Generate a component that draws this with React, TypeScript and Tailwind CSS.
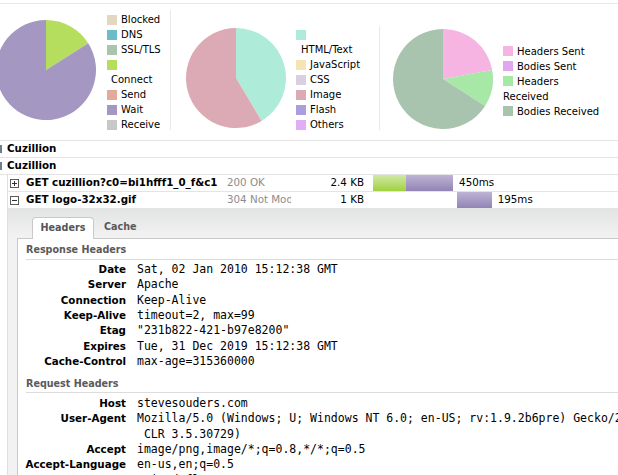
import React from "react";

function arc(cx: number, cy: number, r: number, a0: number, a1: number) {
  const rad = (a: number) => ((a - 90) * Math.PI) / 180;
  const x0 = cx + r * Math.cos(rad(a0));
  const y0 = cy + r * Math.sin(rad(a0));
  const x1 = cx + r * Math.cos(rad(a1));
  const y1 = cy + r * Math.sin(rad(a1));
  const large = a1 - a0 > 180 ? 1 : 0;
  return `M${cx} ${cy} L${x0.toFixed(2)} ${y0.toFixed(2)} A${r} ${r} 0 ${large} 1 ${x1.toFixed(2)} ${y1.toFixed(2)} Z`;
}

function Pie({ slices }: { slices: [number, string][] }) {
  let a = 0;
  return (
    <svg width="100" height="100" viewBox="0 0 100 100" className="shrink-0">
      {slices.map(([deg, color], i) => {
        const d = arc(50, 50, 50, a, a + deg);
        a += deg;
        return <path key={i} d={d} fill={color} />;
      })}
    </svg>
  );
}

function Item({ sw, label }: { sw?: string; label?: string }) {
  return (
    <div className="flex h-[15px] items-center whitespace-nowrap">
      {sw && <span className={`h-[10px] w-[10px] shrink-0 ${sw}`} />}
      {label && <span className="ml-[4px]">{label}</span>}
    </div>
  );
}

function Wrapped({ label, indent }: { label: string; indent: string }) {
  return <div className={`flex h-[15px] items-center whitespace-nowrap ${indent}`}>{label}</div>;
}

function BoxIcon({ open }: { open: boolean }) {
  return (
    <svg width="9" height="9" viewBox="0 0 9 9" className="shrink-0">
      <rect x="0.5" y="0.5" width="8" height="8" fill="#fff" stroke="#5c5c5c" />
      <line x1="2" y1="4.5" x2="7" y2="4.5" stroke="#333" />
      {!open && <line x1="4.5" y1="2" x2="4.5" y2="7" stroke="#333" />}
    </svg>
  );
}

const SCALE = 0.178;

type Req = {
  name: string;
  status: string;
  size: string;
  open: boolean;
  start: number;
  phases: { ms: number; cls: string }[];
  total: string;
};

const reqs: Req[] = [
  {
    name: "GET cuzillion?c0=bi1hfff1_0_f&c1",
    status: "200 OK",
    size: "2.4 KB",
    open: false,
    start: 0,
    phases: [
      { ms: 185, cls: "bg-linear-to-b from-[#d0e9a2] to-[#a2d03a]" },
      { ms: 265, cls: "bg-linear-to-b from-[#beb4d4] to-[#9284b5]" },
    ],
    total: "450ms",
  },
  {
    name: "GET logo-32x32.gif",
    status: "304 Not Modified",
    size: "1 KB",
    open: true,
    start: 472,
    phases: [{ ms: 195, cls: "bg-linear-to-b from-[#beb4d4] to-[#9284b5]" }],
    total: "195ms",
  },
];

function Row({ r }: { r: Req }) {
  return (
    <div className="flex h-[17px] items-center border-b border-[#e4e4e4]">
      <div className="ml-[2px]">
        <BoxIcon open={r.open} />
      </div>
      <div className="ml-[7px] w-[201px] shrink-0 overflow-hidden whitespace-nowrap font-bold text-[10.3px]">
        {r.name}
      </div>
      <div className="w-[64px] shrink-0 overflow-hidden whitespace-nowrap text-[10.3px] text-[#8c8c8c]">
        {r.status}
      </div>
      <div className="w-[73px] shrink-0 text-right whitespace-nowrap text-[10.3px]">{r.size}</div>
      <div className="ml-[9px] flex h-full items-stretch">
        <div style={{ width: r.start * SCALE }} />
        {r.phases.map((p, i) => (
          <div key={i} className={p.cls} style={{ width: p.ms * SCALE }} />
        ))}
        <div className="ml-[6px] flex items-center text-[10.3px] whitespace-nowrap">{r.total}</div>
      </div>
    </div>
  );
}

const respHeaders: [string, string][] = [
  ["Date", "Sat, 02 Jan 2010 15:12:38 GMT"],
  ["Server", "Apache"],
  ["Connection", "Keep-Alive"],
  ["Keep-Alive", "timeout=2, max=99"],
  ["Etag", "\"231b822-421-b97e8200\""],
  ["Expires", "Tue, 31 Dec 2019 15:12:38 GMT"],
  ["Cache-Control", "max-age=315360000"],
];

const reqHeaders: [string, string][] = [
  ["Host", "stevesouders.com"],
  ["User-Agent", "Mozilla/5.0 (Windows; U; Windows NT 6.0; en-US; rv:1.9.2b6pre) Gecko/20091230 Namoroka/3.6b6pre (.NET"],
  ["", " CLR 3.5.30729)"],
  ["Accept", "image/png,image/*;q=0.8,*/*;q=0.5"],
  ["Accept-Language", "en-us,en;q=0.5"],
  ["Accept-Encoding", "gzip,deflate"],
  ["Accept-Charset", "ISO-8859-1,utf-8;q=0.7,*;q=0.7"],
];

function HRow({ k, v }: { k: string; v: string }) {
  return (
    <div className="flex h-[15.33px] items-center whitespace-nowrap">
      <div className="w-[108px] shrink-0 text-right font-bold text-[10.3px]">{k}</div>
      <div className="ml-[11px] whitespace-pre font-['DejaVu_Sans_Mono',monospace] text-[11.5px]">{v}</div>
    </div>
  );
}

export default function App() {
  return (
    <div className="relative h-[475px] w-[618px] overflow-hidden bg-white font-['DejaVu_Sans',sans-serif] text-black">
      {/* Charts strip */}
      <div className="mt-[3px] flex h-[137px] items-start border-t border-[#e8e8e8] text-[10px]">
        {/* group 1 */}
        <div className="ml-[-4px] mt-[16px]">
          <Pie slices={[[57.7, "#b5de5e"], [302.3, "#a498c2"]]} />
        </div>
        <div className="ml-[11px] mt-[8px] w-[52px] shrink-0">
          <Item sw="bg-[#e3d7c2]" label="Blocked" />
          <Item sw="bg-[#6dbdc9]" label="DNS" />
          <Item sw="bg-[#a9c5ae]" label="SSL/TLS" />
          <Item sw="bg-[#b5de5e]" />
          <Wrapped label="Connect" indent="pl-[4px]" />
          <Item sw="bg-[#e3aa9a]" label="Send" />
          <Item sw="bg-[#a498c2]" label="Wait" />
          <Item sw="bg-[#c8c8c8]" label="Receive" />
        </div>
        <div className="ml-[11px] mt-[6px] h-[120px] w-px shrink-0 bg-[#e8e8e8]" />
        {/* group 2 */}
        <div className="ml-[15px] mt-[24px]">
          <Pie slices={[[149.2, "#aeebd9"], [210.8, "#dcaab4"]]} />
        </div>
        <div className="ml-[10px] mt-[23px] w-[74px] shrink-0">
          <Item sw="bg-[#aeebd9]" />
          <Wrapped label="HTML/Text" indent="pl-[5px]" />
          <Item sw="bg-[#f4e4b6]" label="JavaScript" />
          <Item sw="bg-[#d8cfe0]" label="CSS" />
          <Item sw="bg-[#dcaab4]" label="Image" />
          <Item sw="bg-[#a99fdf]" label="Flash" />
          <Item sw="bg-[#e3acf6]" label="Others" />
        </div>
        <div className="ml-[9px] mt-[22px] h-[104px] w-px shrink-0 bg-[#e8e8e8]" />
        {/* group 3 */}
        <div className="ml-[13px] mt-[25px]">
          <Pie slices={[[79.6, "#f5b4e1"], [43.1, "#a8e8a6"], [237.3, "#a9c4ae"]]} />
        </div>
        <div className="ml-[10px] mt-[39.5px] shrink-0">
          <Item sw="bg-[#f5b4e1]" label="Headers Sent" />
          <Item sw="bg-[#e1a7ee]" label="Bodies Sent" />
          <Item sw="bg-[#a8e8a6]" label="Headers" />
          <Wrapped label="Received" indent="" />
          <Item sw="bg-[#a9c4ae]" label="Bodies Received" />
        </div>
      </div>

      {/* Rows */}
      <div className="border-t border-[#e4e4e4]">
        <div className="relative flex h-[17px] items-center border-b border-[#e4e4e4] pl-[7px] font-bold text-[10.3px]">
          <span className="absolute left-0 top-[4px] h-[8px] w-[2px] bg-[#6f7d8c]" />
          Cuzillion
        </div>
        <div className="relative flex h-[17px] items-center border-b border-[#e4e4e4] pl-[7px] font-bold text-[10.3px]">
          <span className="absolute left-0 top-[4px] h-[8px] w-[2px] bg-[#6f7d8c]" />
          Cuzillion
        </div>
        <div className="ml-[7px] border-l border-[#dedede]">
          {reqs.map((r, i) => (
            <Row key={i} r={r} />
          ))}
          {/* details panel */}
          <div className="bg-[#f2f2f2]">
            <div className="flex h-[29px] items-end bg-linear-to-b from-[#e3e4e4] to-[#f2f2f2] pl-[24px]">
              <div className="relative top-px z-10 flex h-[22px] w-[62px] items-center justify-center rounded-t-[4px] border border-b-0 border-[#c9c9c9] bg-white text-[9.6px] font-bold text-[#555]">
                Headers
              </div>
              <div className="ml-[10px] flex h-[22px] items-center text-[9.6px] font-bold text-[#5a5a5a]">Cache</div>
            </div>
            <div className="ml-[9px] h-[300px] border-l border-t border-[#c9c9c9] bg-white">
              <div className="ml-[8px] mt-[3px] h-[18px] border-b border-[#dcdcdc] text-[9.6px] font-bold leading-[16px] text-[#5a5a5a]">
                Response Headers
              </div>
              <div className="pt-[2px]">
                {respHeaders.map(([k, v], i) => (
                  <HRow key={i} k={k} v={v} />
                ))}
              </div>
              <div className="ml-[8px] mt-[6.4px] h-[17px] border-b border-[#dcdcdc] text-[9.6px] font-bold leading-[16px] text-[#5a5a5a]">
                Request Headers
              </div>
              <div className="pt-[3.3px]">
                {reqHeaders.map(([k, v], i) => (
                  <HRow key={i} k={k} v={v} />
                ))}
              </div>
            </div>
          </div>
        </div>
      </div>
    </div>
  );
}
